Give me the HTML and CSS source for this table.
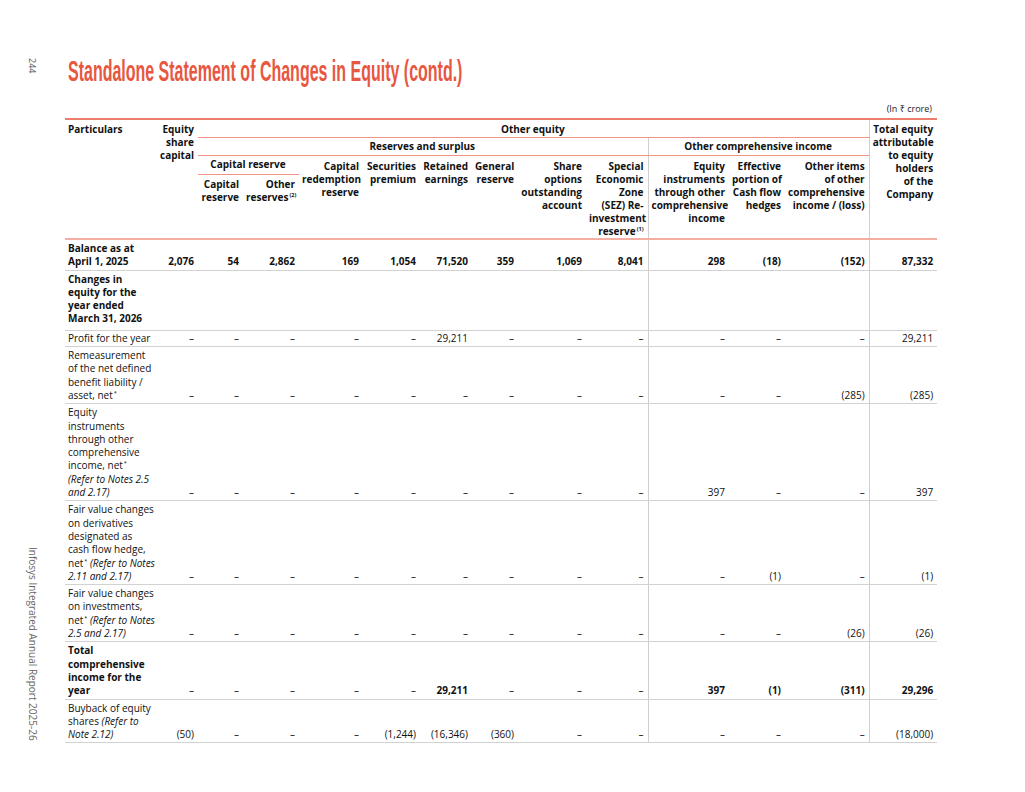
FILE: index.html
```html
<!DOCTYPE html>
<html lang="en">
<head>
<meta charset="utf-8">
<title>Standalone Statement of Changes in Equity (contd.)</title>
<link rel="stylesheet" href="styles.css">
</head>
<body>
<div class="page">
  <aside class="gutter">
    <span class="pageno">244</span>
    <span class="reportname">Infosys Integrated Annual Report 2025-26</span>
  </aside>
  <main class="main">
    <h1 class="title"><span class="title-text">Standalone Statement of Changes in Equity (contd.)</span></h1>
    <p class="unit">(In ₹ crore)</p>
    <table class="soce">
      <colgroup>
        <col class="c-part"><col class="c-esc"><col class="c-cr"><col class="c-or"><col class="c-crr">
        <col class="c-sp"><col class="c-re"><col class="c-gr"><col class="c-so"><col class="c-sez">
        <col class="c-ei"><col class="c-ep"><col class="c-oi"><col class="c-tot">
      </colgroup>
      <thead>
        <tr class="h1">
          <th rowspan="4" class="left">Particulars</th>
          <th rowspan="4">Equity<br>share<br>capital</th>
          <th colspan="11" class="center sb">Other equity</th>
          <th rowspan="4" class="vl">Total equity<br>attributable<br>to equity<br>holders<br>of the<br>Company</th>
        </tr>
        <tr class="h2">
          <th colspan="8" class="center sb">Reserves and surplus</th>
          <th colspan="3" class="center sb vl">Other comprehensive income</th>
        </tr>
        <tr class="h3">
          <th colspan="2" class="center sb">Capital reserve</th>
          <th rowspan="2">Capital<br>redemption<br>reserve</th>
          <th rowspan="2">Securities<br>premium</th>
          <th rowspan="2">Retained<br>earnings</th>
          <th rowspan="2">General<br>reserve</th>
          <th rowspan="2">Share<br>options<br>outstanding<br>account</th>
          <th rowspan="2">Special<br>Economic<br>Zone<br>(SEZ) Re-<br>investment<br>reserve<sup>(1)</sup></th>
          <th rowspan="2" class="vl">Equity<br>instruments<br>through other<br>comprehensive<br>income</th>
          <th rowspan="2">Effective<br>portion of<br>Cash flow<br>hedges</th>
          <th rowspan="2">Other items<br>of other<br>comprehensive<br>income / (loss)</th>
        </tr>
        <tr class="h4">
          <th>Capital<br>reserve</th>
          <th>Other<br>reserves<sup>(2)</sup></th>
        </tr>
      </thead>
      <tbody>
        <tr class="bold first">
          <td class="left">Balance as at<br>April 1, 2025</td>
          <td>2,076</td><td>54</td><td>2,862</td><td>169</td><td>1,054</td><td>71,520</td><td>359</td><td>1,069</td><td>8,041</td>
          <td class="vl">298</td><td>(18)</td><td>(152)</td><td class="vl">87,332</td>
        </tr>
        <tr class="tall">
          <td class="left bold">Changes in<br>equity for the<br>year ended<br>March 31, 2026</td>
          <td></td><td></td><td></td><td></td><td></td><td></td><td></td><td></td><td></td>
          <td class="vl"></td><td></td><td></td><td class="vl"></td>
        </tr>
        <tr class="single">
          <td class="left">Profit for the year</td>
          <td>–</td><td>–</td><td>–</td><td>–</td><td>–</td><td>29,211</td><td>–</td><td>–</td><td>–</td>
          <td class="vl">–</td><td>–</td><td>–</td><td class="vl">29,211</td>
        </tr>
        <tr>
          <td class="left">Remeasurement<br>of the net defined<br>benefit liability /<br>asset, net<sup>*</sup></td>
          <td>–</td><td>–</td><td>–</td><td>–</td><td>–</td><td>–</td><td>–</td><td>–</td><td>–</td>
          <td class="vl">–</td><td>–</td><td>(285)</td><td class="vl">(285)</td>
        </tr>
        <tr>
          <td class="left">Equity<br>instruments<br>through other<br>comprehensive<br>income, net<sup>*</sup><br><em>(Refer to Notes 2.5<br>and 2.17)</em></td>
          <td>–</td><td>–</td><td>–</td><td>–</td><td>–</td><td>–</td><td>–</td><td>–</td><td>–</td>
          <td class="vl">397</td><td>–</td><td>–</td><td class="vl">397</td>
        </tr>
        <tr>
          <td class="left">Fair value changes<br>on derivatives<br>designated as<br>cash flow hedge,<br>net<sup>*</sup> <em>(Refer to Notes<br>2.11 and 2.17)</em></td>
          <td>–</td><td>–</td><td>–</td><td>–</td><td>–</td><td>–</td><td>–</td><td>–</td><td>–</td>
          <td class="vl">–</td><td>(1)</td><td>–</td><td class="vl">(1)</td>
        </tr>
        <tr>
          <td class="left">Fair value changes<br>on investments,<br>net<sup>*</sup> <em>(Refer to Notes<br>2.5 and 2.17)</em></td>
          <td>–</td><td>–</td><td>–</td><td>–</td><td>–</td><td>–</td><td>–</td><td>–</td><td>–</td>
          <td class="vl">–</td><td>–</td><td>(26)</td><td class="vl">(26)</td>
        </tr>
        <tr>
          <td class="left bold">Total<br>comprehensive<br>income for the<br>year</td>
          <td>–</td><td>–</td><td>–</td><td>–</td><td>–</td><td class="bold">29,211</td><td>–</td><td>–</td><td>–</td>
          <td class="vl bold">397</td><td class="bold">(1)</td><td class="bold">(311)</td><td class="vl bold">29,296</td>
        </tr>
        <tr>
          <td class="left">Buyback of equity<br>shares <em>(Refer to<br>Note 2.12)</em></td>
          <td>(50)</td><td>–</td><td>–</td><td>–</td><td>(1,244)</td><td>(16,346)</td><td>(360)</td><td>–</td><td>–</td>
          <td class="vl">–</td><td>–</td><td>–</td><td class="vl">(18,000)</td>
        </tr>
      </tbody>
    </table>
  </main>
</div>
</body>
</html>
```

FILE: styles.css
```css
* { box-sizing: border-box; }

body {
  margin: 0;
  background: #ffffff;
  color: #111111;
  font-family: "Open Sans", "Noto Sans", "DejaVu Sans", sans-serif;
}

.page {
  display: flex;
  width: 1025px;
  height: 792px;
}

.gutter {
  width: 65px;
  flex: none;
  display: flex;
  flex-direction: column;
  justify-content: space-between;
  align-items: flex-start;
  padding: 58px 0 51px 27px;
}

.pageno,
.reportname {
  writing-mode: vertical-rl;
  font-size: 9px;
  line-height: 11px;
  color: #5a5a5a;
}

.reportname {
  font-size: 10px;
  color: #666666;
}

.main {
  width: 872px;
  flex: none;
  padding-top: 56px;
}

.title {
  margin: 0 0 17px 0;
  height: 30px;
  font-family: "Liberation Sans Narrow", "Liberation Sans", sans-serif;
  font-weight: 700;
  font-size: 30px;
  line-height: 30px;
  color: #e8573f;
  white-space: nowrap;
}

.title-text {
  display: inline-block;
  margin-left: 3px;
  transform: scaleX(0.533);
  transform-origin: left center;
}

.unit {
  margin: 0 0 3px 0;
  padding-right: 5px;
  text-align: right;
  font-size: 9px;
  line-height: 12px;
  color: #1b1b1b;
}

.soce {
  width: 872px;
  table-layout: fixed;
  border-collapse: collapse;
  font-size: 10px;
  line-height: 13.3px;
}

.c-part { width: 92px; }
.c-esc  { width: 41px; }
.c-cr   { width: 45px; }
.c-or   { width: 56px; }
.c-crr  { width: 64px; }
.c-sp   { width: 57px; }
.c-re   { width: 52px; }
.c-gr   { width: 46px; }
.c-so   { width: 68px; }
.c-sez  { width: 62px; }
.c-ei   { width: 81px; }
.c-ep   { width: 56px; }
.c-oi   { width: 84px; }
.c-tot  { width: 68px; }

.soce th,
.soce td {
  padding: 2px 4px 1px 3px;
  text-align: right;
  white-space: nowrap;
}

.soce th {
  font-weight: 700;
  vertical-align: top;
  line-height: 13px;
}

.soce thead tr.h1 { height: 18px; }
.soce thead tr.h2 { height: 18px; }
.soce thead tr.h3 { height: 18px; }
.soce thead tr.h4 { height: 62px; }

.soce thead tr.h1 th {
  border-top: 2px solid #ee7e6c;
  padding-top: 3px;
}

.soce thead tr.h2 th,
.soce thead tr.h3 th.center {
  padding-top: 2px;
  padding-bottom: 2px;
}

.soce thead tr.h3 th {
  padding-top: 4px;
  padding-bottom: 0;
}

.soce thead tr.h4 th {
  padding-top: 3px;
}

.soce th.sb {
  border-bottom: 1px solid #f09384;
}

.soce .center { text-align: center; }
.soce .left { text-align: left; }

.soce td {
  vertical-align: bottom;
  border-bottom: 1px solid #d2d2d2;
}

.soce td.left { vertical-align: top; }

.soce tbody tr.first td {
  border-top: 2px solid #f4aea4;
}

.soce tbody tr.tall td {
  padding-bottom: 4px;
}

.soce tbody tr.single td {
  padding-top: 1px;
  padding-bottom: 1px;
}

.soce .vl {
  border-left: 1px solid #cfcfcf;
}

.soce .bold,
.soce .bold td {
  font-weight: 700;
}

.soce sup {
  font-size: 5.5px;
  line-height: 0;
  vertical-align: 4px;
  margin-left: 1px;
}

.soce em {
  font-style: italic;
}
```
